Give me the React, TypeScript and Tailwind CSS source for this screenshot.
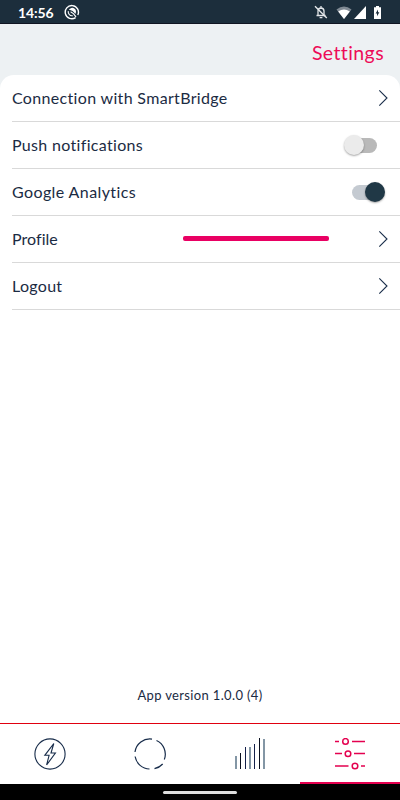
import React, { useState } from 'react';
import clsx from 'clsx';

const Chevron: React.FC = () => (
  <svg width="12" height="18" viewBox="0 0 12 18" fill="none" stroke="#1b2f4b" strokeWidth="1.1">
    <path d="M2.3 1.3 L10 9 L2.3 16.7" />
  </svg>
);

const Toggle: React.FC<{ on: boolean; onClick: () => void }> = ({ on, onClick }) => (
  <button
    role="switch"
    aria-checked={on}
    onClick={onClick}
    className={clsx(
      'flex h-[15px] w-[29px] items-center rounded-full',
      on ? 'mr-[8px] justify-end bg-[#c4cad1]' : 'mr-[12px] bg-[#b9b9b9]',
    )}
  >
    <span
      className={clsx(
        'size-[20px] shrink-0 rounded-full shadow-[0_1px_2px_rgba(0,0,0,0.35)]',
        on ? '-mr-[4px] bg-[#203846]' : '-ml-[4px] bg-[#ebebeb]',
      )}
    />
  </button>
);

const Row: React.FC<{ label: string; spacing: string; children: React.ReactNode }> = ({
  label,
  spacing,
  children,
}) => (
  <div className="ml-3 flex h-[47px] items-center justify-between border-b border-[#d9d9d9] pr-[11px]">
    <span className={clsx('text-[16px] leading-5 whitespace-nowrap', spacing)}>{label}</span>
    {children}
  </div>
);

const StatusBar: React.FC = () => (
  <div className="flex h-6 items-center bg-[#1c2e3c] pl-[18px] text-white shadow-[inset_0_-1px_0_#101522]">
    <span className="w-[46px] pt-px text-[14px] leading-5 font-bold tracking-[-0.1px]">14:56</span>
    <svg width="16" height="16" viewBox="0 0 16 16" fill="none" stroke="white">
      <path d="M11.6 13.6 A6.6 6.6 0 1 1 13.8 11" strokeWidth="1.4" />
      <path d="M8.8 11.7 A3.8 3.8 0 0 1 4.3 7.2" strokeWidth="1.1" />
      <path d="M4.9 5.8 A3.8 3.8 0 1 1 11.2 10 Q9 6.4 4.9 5.8 Z" fill="white" stroke="none" />
      <path d="M6.6 7.8 Q9.5 9 12 12.8" strokeWidth="1.2" />
    </svg>
    <svg className="ml-auto" width="14" height="14" viewBox="0 0 14 14" fill="none" stroke="#e3e6e9">
      <path d="M2.5 10.5 H11.5 M4 10.5 V6 Q4 3.2 7 3 Q10 3.2 10 6 V10.5 M7 3 V1" strokeWidth="1.3" />
      <path d="M5.6 12.6 H8.4 M1 1.2 L12.8 13" strokeWidth="1.4" />
    </svg>
    <svg className="ml-[8px]" width="16" height="13" viewBox="0 0 16 13">
      <path d="M0.5 3.5 Q8 -2.4 15.5 3.5 L8 13 Z" fill="#7f8993" />
      <path d="M2.2 5.4 Q8 1.4 13.8 5.4 L8 13 Z" fill="white" />
    </svg>
    <svg className="ml-[2px]" width="12" height="13" viewBox="0 0 12 13">
      <path d="M12 0 V13 H0 Z" fill="white" />
    </svg>
    <svg className="mr-[19px] ml-[8px]" width="7" height="13" viewBox="0 0 7 13">
      <path d="M0 1.2 H2 V0 H5 V1.2 H7 V13 H0 Z" fill="white" />
      <path d="M4 3.5 L1.6 7.4 H3 V10.3 L5.4 6.3 H4 Z" fill="#1c2e3c" />
    </svg>
  </div>
);

const BoltIcon: React.FC = () => (
  <svg width="32" height="32" viewBox="0 0 32 32" fill="none" stroke="#172c4a" strokeWidth="1.1">
    <circle cx="16" cy="16" r="15.1" />
    <path d="M19.8 5.5 L10.8 17.3 H15.1 L12.6 27 L21.4 15 H17 Z" />
  </svg>
);

const RingIcon: React.FC = () => (
  <svg width="32" height="32" viewBox="0 0 32 32" fill="none" stroke="#172c4a" strokeWidth="1.2">
    <path d="M1 14 A15 15 0 0 1 18 1.1" />
    <path d="M22.5 2.5 A15 15 0 0 1 30.3 21.5" />
    <path d="M28.7 26 A15 15 0 0 1 20.5 30.6" />
    <path d="M15.5 31 A15 15 0 0 1 1.1 18.5" />
  </svg>
);

const bars = [
  { x: 0, top: 18, width: 2, color: '#8396a5' },
  { x: 5, top: 15, width: 1, color: '#0a1020' },
  { x: 10, top: 9, width: 1, color: '#14204a' },
  { x: 14, top: 9, width: 2, color: '#8396a5' },
  { x: 19, top: 6, width: 1, color: '#14204a' },
  { x: 24, top: 0, width: 1, color: '#0a1020' },
  { x: 28, top: 1, width: 2, color: '#8396a5' },
];

const BarsIcon: React.FC = () => (
  <svg width="30" height="32" viewBox="0 0 30 32" shapeRendering="crispEdges">
    {bars.map((bar) => (
      <rect
        key={bar.x}
        x={bar.x}
        y={bar.top}
        width={bar.width}
        height={31 - bar.top}
        fill={bar.color}
      />
    ))}
  </svg>
);

const SlidersIcon: React.FC = () => (
  <svg width="30" height="32" viewBox="0 0 30 32" fill="none" stroke="#e4004f" strokeWidth="1.3">
    <path d="M0 3.5 H4 M17 3.5 H30 M0 15.5 H7 M19 15.5 H30" />
    <path d="M0 28 H13.5 M26 28 H30" />
    <circle cx="10.5" cy="3.4" r="2.8" strokeWidth="1.5" />
    <circle cx="13" cy="15.8" r="2.8" strokeWidth="1.5" />
    <circle cx="20" cy="28" r="2.8" strokeWidth="1.5" />
  </svg>
);

const tabs = [BoltIcon, RingIcon, BarsIcon, SlidersIcon];

const App: React.FC = () => {
  const [push, setPush] = useState(false);
  const [analytics, setAnalytics] = useState(true);
  const [activeTab, setActiveTab] = useState(3);

  return (
    <div className="flex h-[800px] w-[400px] flex-col bg-[#edf1f3] font-['Lato',sans-serif] text-[#1b2b43]">
      <StatusBar />
      <header className="flex h-[51px] items-center justify-end pt-[6px] pr-4">
        <h1 className="text-[19.5px] leading-6 tracking-[0.4px] text-[#ed0b58]">Settings</h1>
      </header>
      <main className="flex flex-1 flex-col rounded-t-[14px] bg-white">
        <Row label="Connection with SmartBridge" spacing="tracking-[0.33px]">
          <Chevron />
        </Row>
        <Row label="Push notifications" spacing="tracking-[0.32px]">
          <Toggle on={push} onClick={() => setPush(!push)} />
        </Row>
        <Row label="Google Analytics" spacing="tracking-[0.4px]">
          <Toggle on={analytics} onClick={() => setAnalytics(!analytics)} />
        </Row>
        <Row label="Profile" spacing="tracking-[0.05px]">
          <span className="mr-[48px] mb-px ml-auto h-[5px] w-[146px] rounded-[2px] bg-[#e90063]" />
          <Chevron />
        </Row>
        <Row label="Logout" spacing="tracking-[0.3px]">
          <Chevron />
        </Row>
        <p className="mt-auto mb-[18px] text-center text-[13px] leading-5 tracking-[0.35px]">
          App version 1.0.0 (4)
        </p>
      </main>
      <nav className="grid h-[61px] grid-cols-4 border-t border-[#e0000f] bg-white">
        {tabs.map((Icon, i) => (
          <button
            key={i}
            onClick={() => setActiveTab(i)}
            className={clsx(
              'flex items-start justify-center border-b-2 pt-[14px]',
              i === activeTab ? 'border-[#e4004f]' : 'border-transparent',
            )}
          >
            <Icon />
          </button>
        ))}
      </nav>
      <div className="flex h-4 items-center justify-center bg-black">
        <span className="h-[3px] w-[74px] rounded-full bg-[#dedede]" />
      </div>
    </div>
  );
};

export default App;
